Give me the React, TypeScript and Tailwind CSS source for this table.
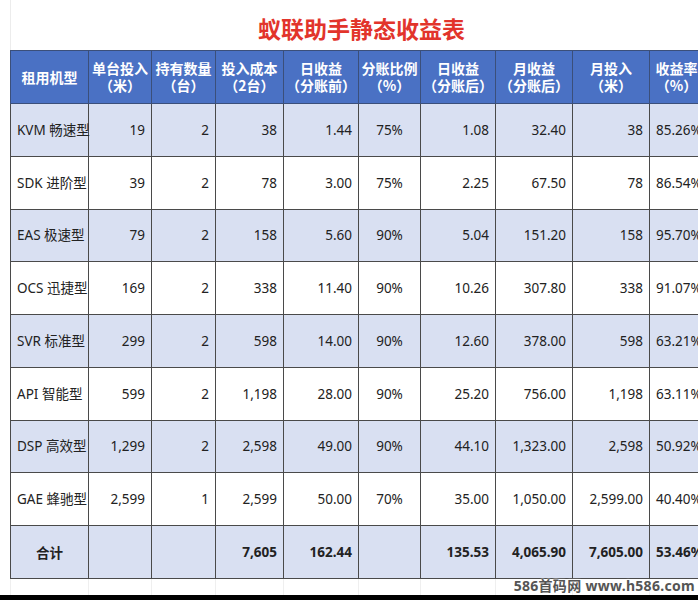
const rows = [
  { name: "KVM 畅速型", unit: "19", qty: "2", cost: "38", dayPre: "1.44", ratio: "75%", dayPost: "1.08", month: "32.40", monthIn: "38", rate: "85.26%" },
  { name: "SDK 进阶型", unit: "39", qty: "2", cost: "78", dayPre: "3.00", ratio: "75%", dayPost: "2.25", month: "67.50", monthIn: "78", rate: "86.54%" },
  { name: "EAS 极速型", unit: "79", qty: "2", cost: "158", dayPre: "5.60", ratio: "90%", dayPost: "5.04", month: "151.20", monthIn: "158", rate: "95.70%" },
  { name: "OCS 迅捷型", unit: "169", qty: "2", cost: "338", dayPre: "11.40", ratio: "90%", dayPost: "10.26", month: "307.80", monthIn: "338", rate: "91.07%" },
  { name: "SVR 标准型", unit: "299", qty: "2", cost: "598", dayPre: "14.00", ratio: "90%", dayPost: "12.60", month: "378.00", monthIn: "598", rate: "63.21%" },
  { name: "API 智能型", unit: "599", qty: "2", cost: "1,198", dayPre: "28.00", ratio: "90%", dayPost: "25.20", month: "756.00", monthIn: "1,198", rate: "63.11%" },
  { name: "DSP 高效型", unit: "1,299", qty: "2", cost: "2,598", dayPre: "49.00", ratio: "90%", dayPost: "44.10", month: "1,323.00", monthIn: "2,598", rate: "50.92%" },
  { name: "GAE 蜂驰型", unit: "2,599", qty: "1", cost: "2,599", dayPre: "50.00", ratio: "70%", dayPost: "35.00", month: "1,050.00", monthIn: "2,599.00", rate: "40.40%" },
];

const headers = [
  ["租用机型"],
  ["单台投入", "（米）"],
  ["持有数量", "（台）"],
  ["投入成本", "（2台）"],
  ["日收益", "（分账前）"],
  ["分账比例", "（%）"],
  ["日收益", "（分账后）"],
  ["月收益", "（分账后）"],
  ["月投入", "（米）"],
  ["收益率", "（%）"],
];

const widths = [78, 63, 64, 68, 75, 62, 75, 77, 77, 54];

const td = "border border-[#4a4a4a] px-[6px] whitespace-nowrap";

export default function App() {
  return (
    <div className="relative w-[698px] h-[600px] overflow-hidden bg-white font-['Noto_Sans','Noto_Sans_CJK_SC',sans-serif] text-[#222]">
      <div className="ml-[10px] h-[50px] border-l border-[#ececec] flex items-center justify-center pt-[7px] pl-[14px]">
        <h1 className="text-[23px] leading-none font-bold text-[#e2342b] font-['Noto_Sans_CJK_SC',sans-serif]">
          蚁联助手静态收益表
        </h1>
      </div>

      <table className="ml-[10px] w-[693px] table-fixed border-collapse text-[13.5px]">
        <colgroup>
          {widths.map((w, i) => (
            <col key={i} style={{ width: w }} />
          ))}
        </colgroup>
        <thead>
          <tr className="h-[53px] bg-[#4a71c4] text-white">
            {headers.map((h, i) => (
              <th key={i} className="border border-[#3b4f7a] px-0 text-[14px] font-bold leading-[17px] whitespace-nowrap font-['Noto_Sans_CJK_SC',sans-serif]">
                {h.map((line, j) => (
                  <div key={j}>{line}</div>
                ))}
              </th>
            ))}
          </tr>
        </thead>
        <tbody>
          {rows.map((r, i) => (
            <tr key={r.name} className={`h-[52.75px] ${i % 2 === 0 ? "bg-[#d9e0f2]" : "bg-white"}`}>
              <td className={`${td} px-0 text-center`}>{r.name}</td>
              <td className={`${td} text-right`}>{r.unit}</td>
              <td className={`${td} text-right`}>{r.qty}</td>
              <td className={`${td} text-right`}>{r.cost}</td>
              <td className={`${td} text-right`}>{r.dayPre}</td>
              <td className={`${td} text-center`}>{r.ratio}</td>
              <td className={`${td} text-right`}>{r.dayPost}</td>
              <td className={`${td} text-right`}>{r.month}</td>
              <td className={`${td} text-right`}>{r.monthIn}</td>
              <td className={`${td} text-right`}>{r.rate}</td>
            </tr>
          ))}
          <tr className="h-[53px] bg-[#d9e0f2] font-bold">
            <td className={`${td} text-center font-['Noto_Sans_CJK_SC',sans-serif]`}>合计</td>
            <td className={td}></td>
            <td className={td}></td>
            <td className={`${td} text-right`}>7,605</td>
            <td className={`${td} text-right`}>162.44</td>
            <td className={td}></td>
            <td className={`${td} text-right`}>135.53</td>
            <td className={`${td} text-right`}>4,065.90</td>
            <td className={`${td} text-right`}>7,605.00</td>
            <td className={`${td} text-right`}>53.46%</td>
          </tr>
          <tr className="h-[17px]">
            {widths.map((_, i) => (
              <td key={i} className="border-x border-b border-[#efefef]"></td>
            ))}
          </tr>
        </tbody>
      </table>

      <div className="absolute right-[3px] bottom-[7px] text-[14px] leading-none font-bold text-[#555] tracking-[0.3px] font-['Noto_Sans','Noto_Sans_CJK_SC',sans-serif] [text-shadow:0_0_2px_#fff,0_0_2px_#fff]">
        586首码网 www.h586.com
      </div>
      <div className="absolute left-0 right-0 bottom-0 h-[5px] bg-black" />
    </div>
  );
}
